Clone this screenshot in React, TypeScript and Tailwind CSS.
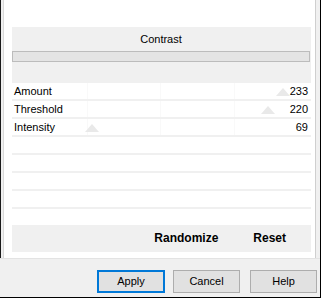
import React from 'react'

const rows = [
  { label: 'Amount', value: 233 },
  { label: 'Threshold', value: 220 },
  { label: 'Intensity', value: 69 },
]

function Thumb({ value }: { value: number }) {
  // slider thumb: faint triangle on the row bottom, range 0..250
  const left = Math.round((value / 250) * 291) - 7
  return (
    <svg
      className="absolute bottom-[3px]"
      style={{ left }}
      width="14"
      height="8"
      viewBox="0 0 14 8"
    >
      <polygon points="7,0 14,8 0,8" fill="#e9e9e9" />
    </svg>
  )
}

function Row({ label, value }: { label?: string; value?: number }) {
  return (
    <div className="relative h-[18px] border-b-2 border-[#f0f0f0] flex items-center justify-between pl-[2px] pr-[3px]">
      {label && (
        <>
          <div className="absolute left-[75px] top-0 bottom-0 w-px bg-[#f9f9f9]" />
          <div className="absolute left-[148px] top-0 bottom-0 w-px bg-[#f9f9f9]" />
          <div className="absolute left-[222px] top-0 bottom-0 w-px bg-[#f9f9f9]" />
          <Thumb value={value!} />
          <span className="relative">{label}</span>
          <span className="relative">{value}</span>
        </>
      )}
    </div>
  )
}

export default function App() {
  return (
    <div className="w-[321px] h-[298px] flex flex-col border-r border-b border-black bg-[#f0f0f0] text-[11px] leading-[13px] text-black font-['Liberation_Sans',Arial,sans-serif]">
      <div className="h-[258px] flex border-l border-[#1a1a1a] bg-white">
        <div className="w-[2px] bg-[#f0f0f0]" />
        <div className="w-px bg-[#d9d9d9]" />
        <div className="w-[8px]" />
        <div className="w-[299px] flex flex-col pt-[27px]">
          <div className="h-[56px] bg-[#f0f0f0] pt-[6px] pr-px">
            <div className="text-center">Contrast</div>
            <div className="mt-[5px] h-[11px] bg-[#e4e4e4] border border-[#bcbcbc]" />
          </div>
          {rows.map((r) => (
            <Row key={r.label} label={r.label} value={r.value} />
          ))}
          <Row />
          <Row />
          <Row />
          <Row />
          <div className="mt-[16px] h-[27px] bg-[#f0f0f0] flex items-center justify-end pr-[25px] gap-[35px] text-[12px] font-bold">
            <span>Randomize</span>
            <span>Reset</span>
          </div>
        </div>
        <div className="w-[4px]" />
        <div className="w-px bg-[#cfcfcf]" />
        <div className="w-[4px] bg-[#f0f0f0]" />
      </div>
      <div className="flex-1 border-t border-[#e3e3e3] flex items-start pt-[11px] pl-[97px]">
        <button className="w-[68px] h-[23px] bg-[#e1e1e1] border-2 border-[#0078d7]">Apply</button>
        <button className="ml-[8px] w-[67px] h-[23px] bg-[#e1e1e1] border border-[#adadad]">Cancel</button>
        <button className="ml-[10px] w-[67px] h-[23px] bg-[#e1e1e1] border border-[#adadad]">Help</button>
      </div>
    </div>
  )
}
